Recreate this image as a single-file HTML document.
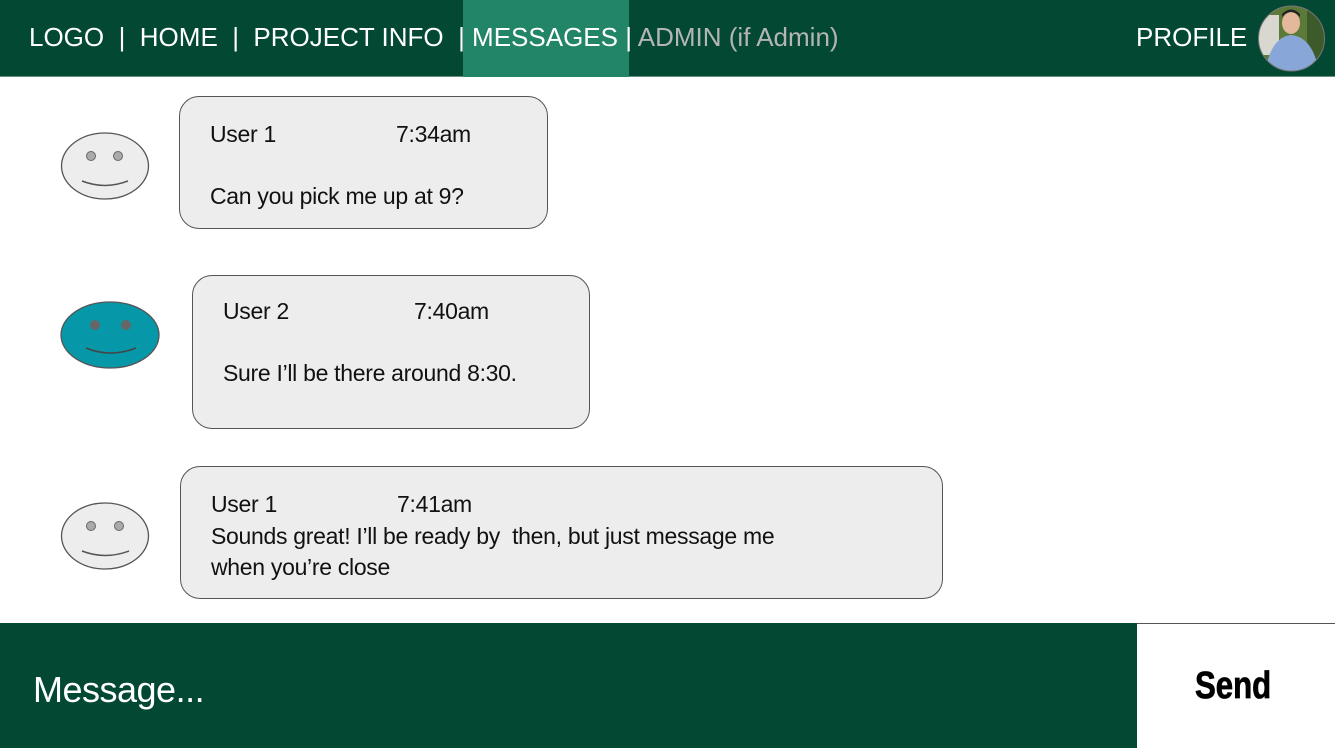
<!DOCTYPE html>
<html><head><meta charset="utf-8"><style>
*{margin:0;padding:0;box-sizing:border-box}
body{width:1335px;height:748px;position:relative;background:#fff;font-family:"Liberation Sans",sans-serif;overflow:hidden}
.nav{position:absolute;left:0;top:0;width:1335px;height:77px;background:#034833;border-bottom:1px solid #6a8f80}
.hl{position:absolute;left:463px;top:0;width:166px;height:77px;background:#238567}
.nt{position:absolute;top:22px;font-size:26px;color:#fff;white-space:nowrap}
.bub{position:absolute;background:#ededed;border:1.5px solid #555;border-radius:20px;font-size:23px;color:#111;letter-spacing:-0.3px}
.bub span{position:absolute;white-space:nowrap}
.av{position:absolute}
.foot{position:absolute;left:0;top:623px;width:1137px;height:125px;background:#034833}
</style></head><body>
<div class="nav"><div class="hl"></div>
<div class="nt" style="left:29px">LOGO&nbsp; | &nbsp;HOME &nbsp;| &nbsp;PROJECT INFO &nbsp;| MESSAGES | <span style="color:#b5b5b5">ADMIN (if Admin)</span></div>
<div class="nt" style="left:1136px">PROFILE</div>
<svg style="position:absolute;left:1257px;top:5px" width="69" height="67"><defs><clipPath id="c"><ellipse cx="34.5" cy="33.5" rx="33" ry="32.5"/></clipPath></defs>
<g clip-path="url(#c)"><rect width="69" height="67" fill="#5b7a3a"/><rect x="0" y="10" width="22" height="40" fill="#d8d8d0"/><rect x="50" y="0" width="19" height="67" fill="#3d5a2a"/><path d="M8 67 Q14 32 34 30 Q56 32 62 67Z" fill="#88a6d8"/><ellipse cx="34" cy="18" rx="9" ry="11" fill="#e4b89a"/><path d="M25 12 Q34 2 43 12 L43 9 Q34 0 25 9Z" fill="#222"/></g>
<ellipse cx="34.5" cy="33.5" rx="33" ry="32.5" fill="none" stroke="#777" stroke-width="1"/></svg>
</div>

<svg class="av" style="left:60px;top:132px" width="90" height="70"><ellipse cx="45" cy="34" rx="43.5" ry="33" fill="#ededed" stroke="#555" stroke-width="1.3"/><circle cx="31" cy="24" r="4.5" fill="#aaa" stroke="#666"/><circle cx="58" cy="24" r="4.5" fill="#aaa" stroke="#666"/><path d="M22 49 Q45 58 68 49" fill="none" stroke="#555" stroke-width="1.5"/></svg>
<div class="bub" style="left:179px;top:96px;width:369px;height:133px"><span style="left:30px;top:24px">User 1</span><span style="left:216px;top:24px">7:34am</span><span style="left:30px;top:86px">Can you pick me up at 9?</span></div>

<svg class="av" style="left:60px;top:301px" width="101" height="69"><ellipse cx="50" cy="34" rx="49" ry="33" fill="#0697a8" stroke="#555" stroke-width="1.3"/><circle cx="35" cy="24" r="5" fill="#666"/><circle cx="66" cy="24" r="5" fill="#666"/><path d="M26 47 Q50 57 76 47" fill="none" stroke="#444" stroke-width="1.5"/></svg>
<div class="bub" style="left:192px;top:275px;width:398px;height:154px"><span style="left:30px;top:22px">User 2</span><span style="left:221px;top:22px">7:40am</span><span style="left:30px;top:84px">Sure I’ll be there around 8:30.</span></div>

<svg class="av" style="left:60px;top:502px" width="91" height="70"><ellipse cx="45" cy="34" rx="43.5" ry="33" fill="#ededed" stroke="#555" stroke-width="1.3"/><circle cx="31" cy="24" r="4.5" fill="#aaa" stroke="#666"/><circle cx="59" cy="24" r="4.5" fill="#aaa" stroke="#666"/><path d="M22 49 Q45 58 69 49" fill="none" stroke="#555" stroke-width="1.5"/></svg>
<div class="bub" style="left:180px;top:466px;width:763px;height:133px"><span style="left:30px;top:24px">User 1</span><span style="left:216px;top:24px">7:41am</span><span style="left:30px;top:56px">Sounds great! I’ll be ready by &nbsp;then, but just message me</span><span style="left:30px;top:87px">when you’re close</span></div>

<div class="foot"><div style="position:absolute;left:33px;top:46px;font-size:36px;color:#fff;letter-spacing:-0.5px">Message...</div></div>
<div style="position:absolute;left:1137px;top:623px;width:198px;height:1px;background:#555"></div>
<div style="position:absolute;left:1195px;top:665px;font-size:38px;font-weight:bold;color:#000;transform:scaleX(0.82);transform-origin:left;-webkit-text-stroke:0.8px #000">Send</div>
</body></html>
